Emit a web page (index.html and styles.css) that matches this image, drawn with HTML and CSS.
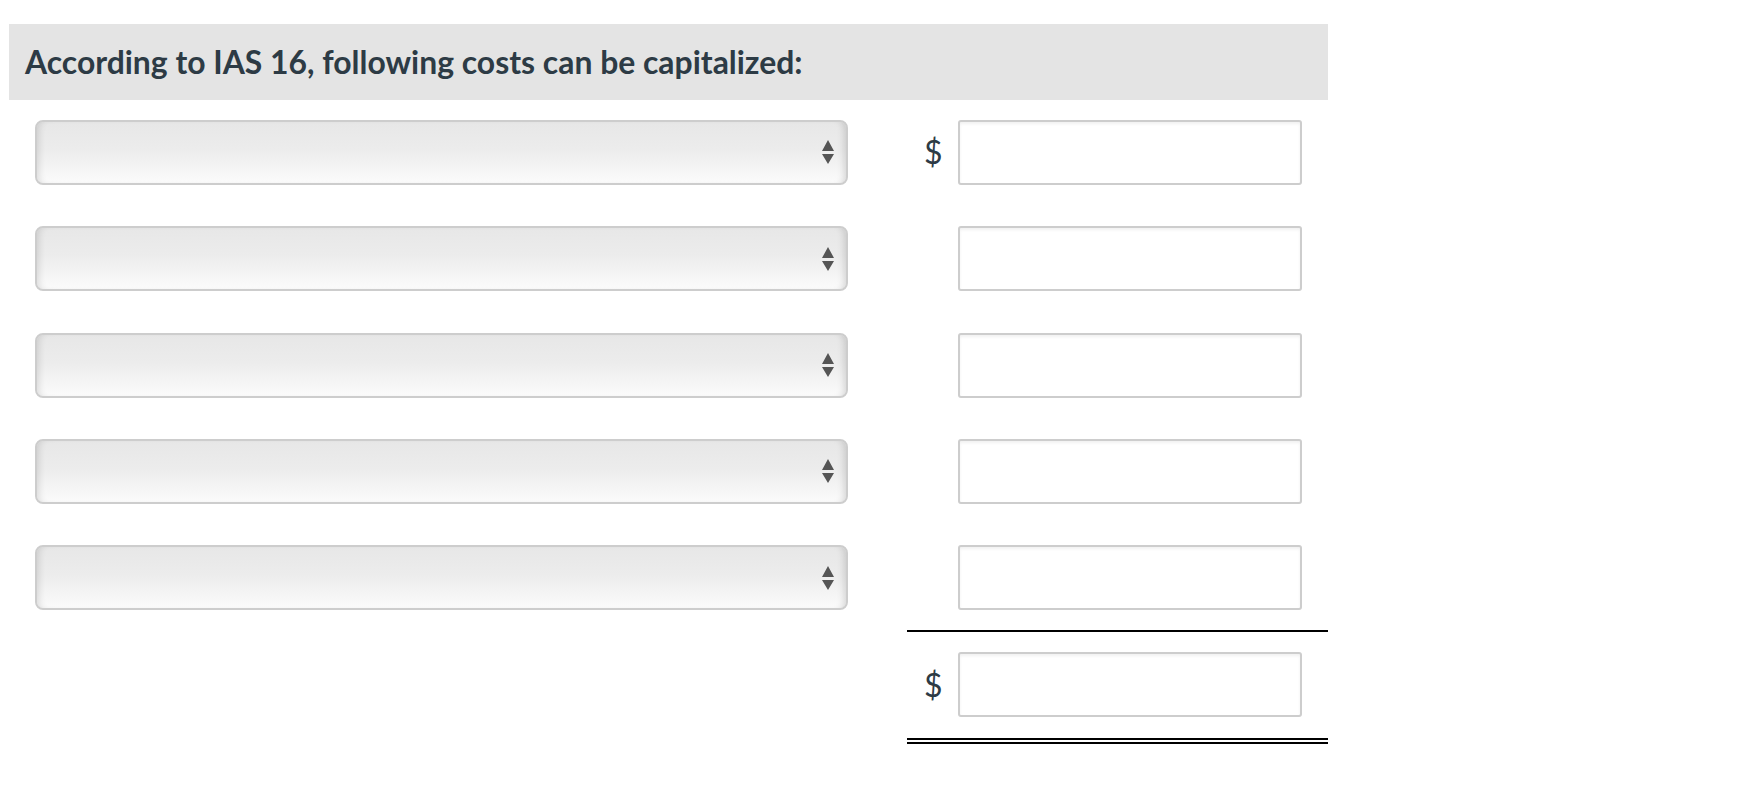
FILE: index.html
```html
<!DOCTYPE html>
<html lang="en">
<head>
<meta charset="utf-8">
<title>IAS 16</title>
<link rel="stylesheet" href="styles.css">
</head>
<body>
<div class="sheet">
  <div class="header">According to IAS 16, following costs can be capitalized:</div>
  <div class="rows">
    <div class="row">
      <div class="select"><svg class="arrows" width="12" height="24" viewBox="0 0 12 24"><path d="M0 11 L6 0 L12 11 Z M0 14 L12 14 L6 24 Z" fill="#555"/></svg></div>
      <div class="amount"><span class="cur">$</span><div class="input"></div></div>
    </div>
    <div class="row">
      <div class="select"><svg class="arrows" width="12" height="24" viewBox="0 0 12 24"><path d="M0 11 L6 0 L12 11 Z M0 14 L12 14 L6 24 Z" fill="#555"/></svg></div>
      <div class="amount"><span class="cur"></span><div class="input"></div></div>
    </div>
    <div class="row">
      <div class="select"><svg class="arrows" width="12" height="24" viewBox="0 0 12 24"><path d="M0 11 L6 0 L12 11 Z M0 14 L12 14 L6 24 Z" fill="#555"/></svg></div>
      <div class="amount"><span class="cur"></span><div class="input"></div></div>
    </div>
    <div class="row">
      <div class="select"><svg class="arrows" width="12" height="24" viewBox="0 0 12 24"><path d="M0 11 L6 0 L12 11 Z M0 14 L12 14 L6 24 Z" fill="#555"/></svg></div>
      <div class="amount"><span class="cur"></span><div class="input"></div></div>
    </div>
    <div class="row">
      <div class="select"><svg class="arrows" width="12" height="24" viewBox="0 0 12 24"><path d="M0 11 L6 0 L12 11 Z M0 14 L12 14 L6 24 Z" fill="#555"/></svg></div>
      <div class="amount"><span class="cur"></span><div class="input"></div></div>
    </div>
    <div class="total-row">
      <div class="total">
        <div class="amount"><span class="cur">$</span><div class="input"></div></div>
      </div>
    </div>
  </div>
</div>
</body>
</html>
```
FILE: styles.css
```css
html, body {
  margin: 0;
  padding: 0;
  background: #fff;
}
body {
  font-family: Lato, "Open Sans", "Liberation Sans", sans-serif;
  color: #2d3b45;
}
.sheet {
  width: 1319px;
  padding: 24px 0 0 9px;
}
.header {
  height: 76px;
  background: #e4e4e4;
  display: flex;
  align-items: center;
  padding-left: 16px;
  font-size: 31.9px;
  font-weight: 700;
  color: #2d3b45;
  box-sizing: border-box;
}
.rows {
  display: flex;
  flex-direction: column;
  padding-top: 19.8px;
  gap: 41.4px;
}
.row {
  display: flex;
  align-items: center;
  height: 65px;
}
.select {
  margin-left: 26px;
  width: 813px;
  height: 65px;
  box-sizing: border-box;
  border: 2px solid #cdcdcd;
  border-radius: 8px;
  background: linear-gradient(to bottom, #e7e7e7 0%, #ececec 45%, #fbfbfb 100%);
  box-shadow: inset 7px 0 7px -5px rgba(0,0,0,0.12), inset -7px 0 7px -5px rgba(0,0,0,0.14);
  display: flex;
  align-items: center;
  justify-content: flex-end;
  padding-right: 12px;
}
.arrows {
  display: block;
}
.amount {
  margin-left: 59px;
  width: 421px;
  display: flex;
  align-items: center;
  padding-left: 17px;
  box-sizing: border-box;
}
.cur {
  width: 34px;
  font-size: 32px;
  line-height: 1;
  color: #2d3b45;
}
.input {
  width: 344px;
  height: 65px;
  box-sizing: border-box;
  border: 2px solid #cdcdcd;
  border-radius: 3px;
  background: #fff;
  box-shadow: inset 0 2px 3px rgba(0,0,0,0.06);
}
.total-row {
  display: flex;
  margin-top: -21.4px;
}
.total {
  margin-left: 898px;
  width: 421px;
  border-top: 2px solid #000;
  border-bottom: 6px double #000;
  padding: 20px 0 21px 0;
}
.total .amount {
  margin-left: 0;
}
```
